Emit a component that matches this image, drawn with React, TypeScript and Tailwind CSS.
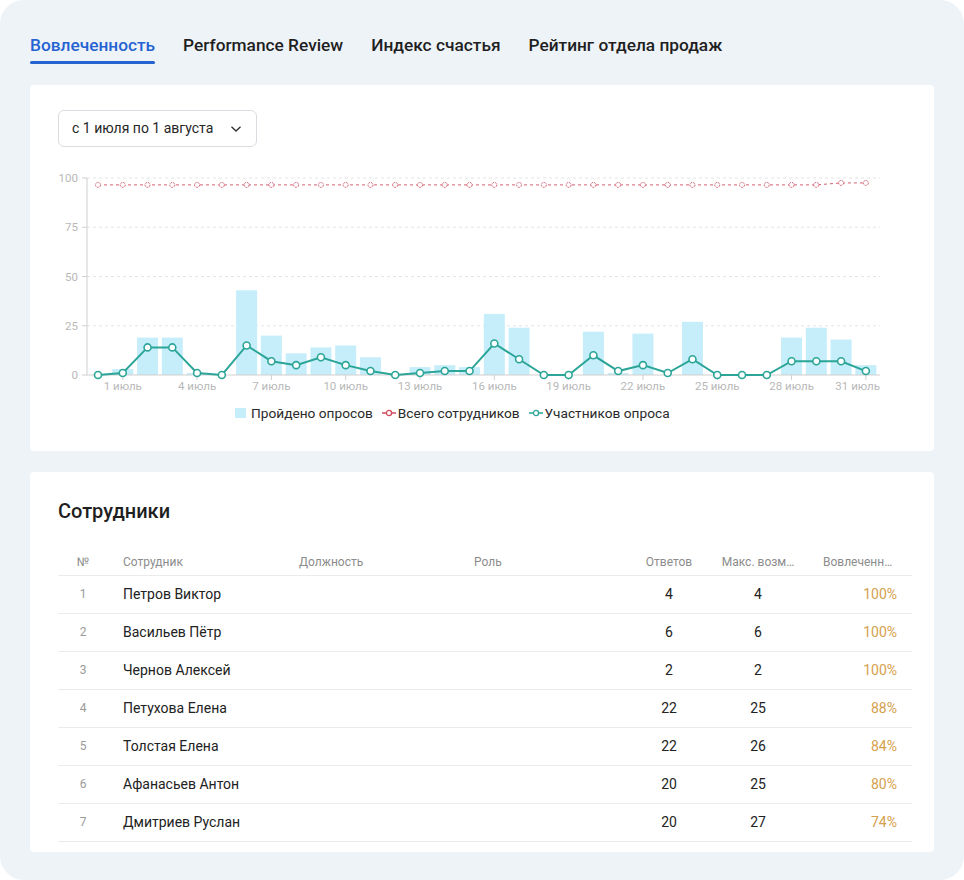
import React from "react";

const bars = [0, 3, 19, 19, 1, 0, 43, 20, 11, 14, 15, 9, 0, 4, 5, 4, 31, 24, 0, 0, 22, 1, 21, 0, 27, 0, 0, 0, 19, 24, 18, 5];
const parts = [0, 1, 14, 14, 1, 0, 15, 7, 5, 9, 5, 2, 0, 1, 2, 2, 16, 8, 0, 0, 10, 2, 5, 1, 8, 0, 0, 0, 7, 7, 7, 2];
const total = bars.map((_, i) => (i >= 30 ? 97.5 : 96.5));

const X = (i: number) => 68 + 24.77 * i;
const Y = (v: number) => 210 - v * 1.97;

const rows = [
  { n: 1, name: "Петров Виктор", a: 4, m: 4, p: "100%" },
  { n: 2, name: "Васильев Пётр", a: 6, m: 6, p: "100%" },
  { n: 3, name: "Чернов Алексей", a: 2, m: 2, p: "100%" },
  { n: 4, name: "Петухова Елена", a: 22, m: 25, p: "88%" },
  { n: 5, name: "Толстая Елена", a: 22, m: 26, p: "84%" },
  { n: 6, name: "Афанасьев Антон", a: 20, m: 25, p: "80%" },
  { n: 7, name: "Дмитриев Руслан", a: 20, m: 27, p: "74%" },
];

function Chart() {
  const labels = [1, 4, 7, 10, 13, 16, 19, 22, 25, 28, 31];
  const linePts = parts.map((v, i) => `${X(i)},${Y(v)}`).join(" ");
  const redPts = total.map((v, i) => `${X(i)},${Y(v)}`).join(" ");
  return (
    <svg width="904" height="230" className="block">
      {[25, 50, 75, 100].map((v) => (
        <line key={v} x1={57} x2={850} y1={Y(v)} y2={Y(v)} stroke="#e4e4e4" strokeDasharray="3 3" />
      ))}
      {[0, 25, 50, 75, 100].map((v) => (
        <g key={v}>
          <line x1={52} x2={57} y1={Y(v)} y2={Y(v)} stroke="#cfcfcf" />
          <text x={48} y={Y(v) + 4} textAnchor="end" fontSize="11.5" fill="#b8b8b8" fontFamily="Roboto, sans-serif">
            {v}
          </text>
        </g>
      ))}
      <line x1={57} x2={57} y1={Y(100)} y2={210} stroke="#cfcfcf" />
      {bars.map((v, i) =>
        v > 0 ? <rect key={i} x={X(i) - 10.5} y={Y(v)} width={21} height={210 - Y(v)} fill="#c6eefa" /> : null
      )}
      <line x1={57} x2={850} y1={210} y2={210} stroke="#cfcfcf" />
      {labels.map((d) => (
        <g key={d}>
          <line x1={X(d)} x2={X(d)} y1={210} y2={215} stroke="#cfcfcf" />
          <text
            x={d === 31 ? 850 : X(d)}
            y={225}
            textAnchor={d === 31 ? "end" : "middle"}
            fontSize="11.5"
            fill="#b8b8b8"
            fontFamily="Roboto, sans-serif"
          >
            {d} июль
          </text>
        </g>
      ))}
      <polyline points={redPts} fill="none" stroke="#d36070" strokeWidth="1" strokeDasharray="3 3" />
      {total.map((v, i) => (
        <circle key={i} cx={X(i)} cy={Y(v)} r={2.5} fill="#fff" stroke="#d36070" strokeWidth="1" strokeDasharray="2 1" />
      ))}
      <polyline points={linePts} fill="none" stroke="#2ba597" strokeWidth="2" />
      {parts.map((v, i) => (
        <circle key={i} cx={X(i)} cy={Y(v)} r={3.5} fill="#fff" stroke="#2ba597" strokeWidth="1.6" />
      ))}
    </svg>
  );
}

function LegendLine({ color }: { color: string }) {
  return (
    <svg width="14" height="8" className="mr-[2px]">
      <line x1="0" x2="14" y1="4" y2="4" stroke={color} strokeWidth="1.5" />
      <circle cx="7" cy="4" r="2.6" fill="#fff" stroke={color} strokeWidth="1.3" />
    </svg>
  );
}

export default function App() {
  return (
    <div className="w-[964px] h-[880px] bg-white font-[Roboto,sans-serif]">
      <div className="w-full h-full bg-[#eef3f8] rounded-[24px] px-[30px] pt-[33px]">
        <div className="flex gap-[28px] h-[52px]">
          <div className="flex flex-col">
            <span className="text-[17.3px] leading-[24px] font-medium text-[#2563d2]">Вовлеченность</span>
            <div className="mt-[4px] h-[3px] rounded-full bg-[#2563d2]" />
          </div>
          <span className="text-[17.3px] leading-[24px] font-medium text-[#1f1f1f]">Performance Review</span>
          <span className="text-[17.3px] leading-[24px] font-medium text-[#1f1f1f]">Индекс счастья</span>
          <span className="text-[17.3px] leading-[24px] font-medium text-[#1f1f1f]">Рейтинг отдела продаж</span>
        </div>

        <div className="bg-white rounded-[4px] h-[366px] pt-[25px]">
          <div className="ml-[28px] w-[199px] h-[37px] border border-[#d9dde2] rounded-[6px] flex items-center pl-[13px] pr-[14px] justify-between">
            <span className="text-[14px] text-[#262626]">с 1 июля по 1 августа</span>
            <svg width="12" height="8" viewBox="0 0 12 8">
              <path d="M1.5 1.8 L6 6 L10.5 1.8" fill="none" stroke="#333" strokeWidth="1.4" />
            </svg>
          </div>
          <div className="mt-[18px]">
            <Chart />
          </div>
          <div className="flex items-center pl-[205px] mt-[8px] text-[13.7px] text-[#2a2a2a] leading-[20px]">
            <span className="w-[11px] h-[10px] bg-[#c6eefa] mr-[5px]" />
            <span>Пройдено опросов</span>
            <span className="ml-[9px] flex items-center">
              <LegendLine color="#d04a5c" />
            </span>
            <span>Всего сотрудников</span>
            <span className="ml-[9px] flex items-center">
              <LegendLine color="#2ba597" />
            </span>
            <span>Участников опроса</span>
          </div>
        </div>

        <div className="mt-[21px] bg-white rounded-[4px] pl-[28px] pr-[22px] pt-[27px] pb-[10px]">
          <h2 className="text-[20px] leading-[24px] font-medium text-[#1f1f1f]">Сотрудники</h2>
          <div className="mt-[15px] grid grid-cols-[65px_176px_175px_150px_90px_88px_110px] h-[38px] items-end pb-[5px] border-b border-[#ebebeb] text-[12px] leading-[16px] text-[#8c8c8c]">
            <span className="text-center pr-[15px]">№</span>
            <span>Сотрудник</span>
            <span>Должность</span>
            <span>Роль</span>
            <span className="text-center">Ответов</span>
            <span className="text-center">Макс. возм…</span>
            <span className="pl-[21px]">Вовлеченн…</span>
          </div>
          {rows.map((r) => (
            <div
              key={r.n}
              className="grid grid-cols-[65px_176px_175px_150px_90px_88px_110px] h-[38px] items-center pb-[1px] border-b border-[#ebebeb] text-[14px] text-[#222]"
            >
              <span className="text-center pr-[15px] text-[12px] text-[#9a9a9a]">{r.n}</span>
              <span>{r.name}</span>
              <span />
              <span />
              <span className="text-center">{r.a}</span>
              <span className="text-center">{r.m}</span>
              <span className="text-right pr-[15px] text-[#d5a04d]">{r.p}</span>
            </div>
          ))}
        </div>
      </div>
    </div>
  );
}
